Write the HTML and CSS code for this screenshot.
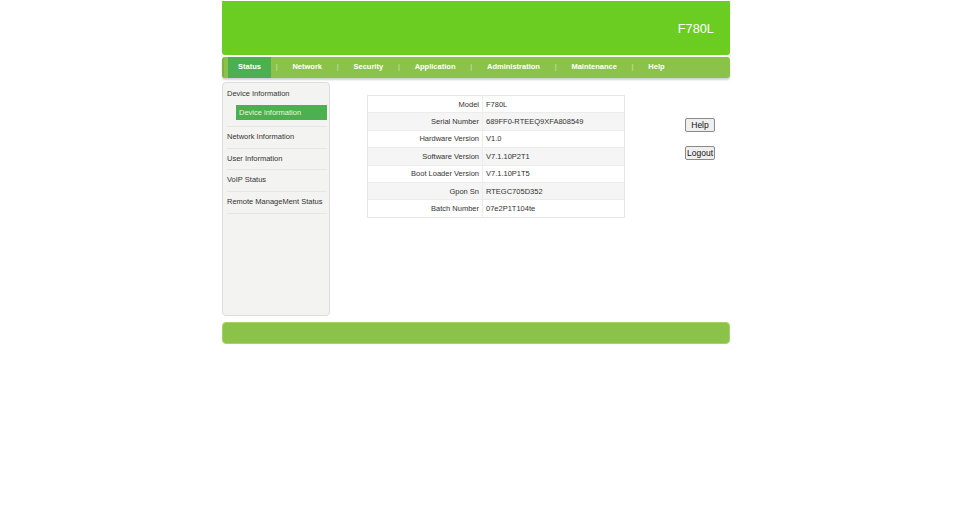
FILE: index.html
```html
<!DOCTYPE html>
<html lang="en">
<head>
  <meta charset="UTF-8" />
  <title>F780L</title>
  <link rel="stylesheet" href="styles.css">
</head>
<body>
  <div class="wrap">
    <div class="top-bar">
      <span class="model-name">F780L</span>
    </div>

    <ul class="nav">
      <li class="nav-item active">Status</li>
      <li class="nav-sep">|</li>
      <li class="nav-item">Network</li>
      <li class="nav-sep">|</li>
      <li class="nav-item">Security</li>
      <li class="nav-sep">|</li>
      <li class="nav-item">Application</li>
      <li class="nav-sep">|</li>
      <li class="nav-item">Administration</li>
      <li class="nav-sep">|</li>
      <li class="nav-item">Maintenance</li>
      <li class="nav-sep">|</li>
      <li class="nav-item">Help</li>
    </ul>

    <div class="main">
      <div class="side-menu">
        <div class="menu-group">
          <div class="menu-title">Device Information</div>
          <div class="menu-sub active">Device information</div>
        </div>
        <div class="menu-item">Network Information</div>
        <div class="menu-item">User Information</div>
        <div class="menu-item">VoIP Status</div>
        <div class="menu-item">Remote ManageMent Status</div>
      </div>

      <div class="content">
        <table class="info-table">
          <tr><td class="lbl">Model</td><td>F780L</td></tr>
          <tr><td class="lbl">Serial Number</td><td>689FF0-RTEEQ9XFA808549</td></tr>
          <tr><td class="lbl">Hardware Version</td><td>V1.0</td></tr>
          <tr><td class="lbl">Software Version</td><td>V7.1.10P2T1</td></tr>
          <tr><td class="lbl">Boot Loader Version</td><td>V7.1.10P1T5</td></tr>
          <tr><td class="lbl">Gpon Sn</td><td>RTEGC705D352</td></tr>
          <tr><td class="lbl">Batch Number</td><td>07e2P1T104te</td></tr>
        </table>
      </div>

      <div class="actions">
        <button type="button">Help</button>
        <button type="button">Logout</button>
      </div>
    </div>

    <div class="bottom-bar"></div>
  </div>
</body>
</html>
```

FILE: styles.css
```css
*, *::before, *::after {
  box-sizing: border-box;
}

body {
  margin: 0;
  font-family: "Liberation Sans", Arial, sans-serif;
  font-size: 7.5px;
  color: #333;
  background: #fff;
}

.wrap {
  width: 508px;
  margin: 0 0 0 222px;
  padding-top: 1px;
}

.top-bar {
  height: 54px;
  background-color: #6bcd22;
  border-radius: 0 0 3px 3px;
  display: flex;
  align-items: center;
  justify-content: flex-end;
  padding-right: 16px;
}

.model-name {
  color: #fff;
  font-size: 12.8px;
  margin-top: 1px;
}

.nav {
  list-style: none;
  margin: 2px 0 0;
  padding: 0 0 0 4px;
  height: 21px;
  display: flex;
  background-color: #8bc34a;
  border-left: 2px solid #7db33f;
  border-radius: 3px;
  box-shadow: 0 2px 2px rgba(0, 0, 0, 0.18);
}

.nav-item {
  padding: 0 10px;
  line-height: 20px;
  color: #fff;
  font-weight: bold;
}

.nav-item.active {
  background-color: #4caf50;
}

.nav-sep {
  width: 11.5px;
  text-align: center;
  line-height: 20px;
  color: #c9e4aa;
}

.main {
  display: flex;
  margin-top: 4px;
}

.side-menu {
  width: 108px;
  height: 234px;
  background-color: #f3f4f2;
  border: 1px solid #dcdedb;
  border-radius: 4px;
  padding: 0 2px 0 4px;
}

.menu-group {
  border-bottom: 1px solid #e6e7e5;
  padding-bottom: 6px;
}

.menu-title {
  line-height: 22px;
}

.menu-sub {
  margin-left: 9px;
  height: 15px;
  line-height: 15px;
  padding-left: 3px;
  background-color: #4caf50;
  color: #e8f7dc;
}

.menu-item {
  line-height: 20.7px;
  border-bottom: 1px solid #e6e7e5;
}

.content {
  width: 258px;
  margin: 13px 0 0 37px;
}

.info-table {
  width: 100%;
  border-collapse: collapse;
  border: 1px solid #e6e6e6;
}

.info-table td {
  height: 17.4px;
  padding: 0 3px;
  border-left: 1px solid #ececec;
}

.info-table tr:nth-child(even) td {
  background-color: #f5f5f5;
}

.info-table tr + tr td {
  border-top: 1px solid #ececec;
}

.info-table .lbl {
  width: 115px;
  text-align: right;
  border-left: none;
}

.actions {
  display: flex;
  flex-direction: column;
  align-items: flex-start;
  gap: 14px;
  margin: 36px 0 0 60px;
}

.actions button {
  font-family: "Liberation Sans", Arial, sans-serif;
  font-size: 8.5px;
  width: 30px;
  height: 14px;
  padding: 0;
  color: #111;
  background-color: #efefef;
  border: 1px solid #8a8a8a;
  border-radius: 2px;
}

.bottom-bar {
  height: 22px;
  margin-top: 6px;
  background-color: #8bc34a;
  border: 1px solid #a4d36c;
  border-radius: 4px;
}
```
